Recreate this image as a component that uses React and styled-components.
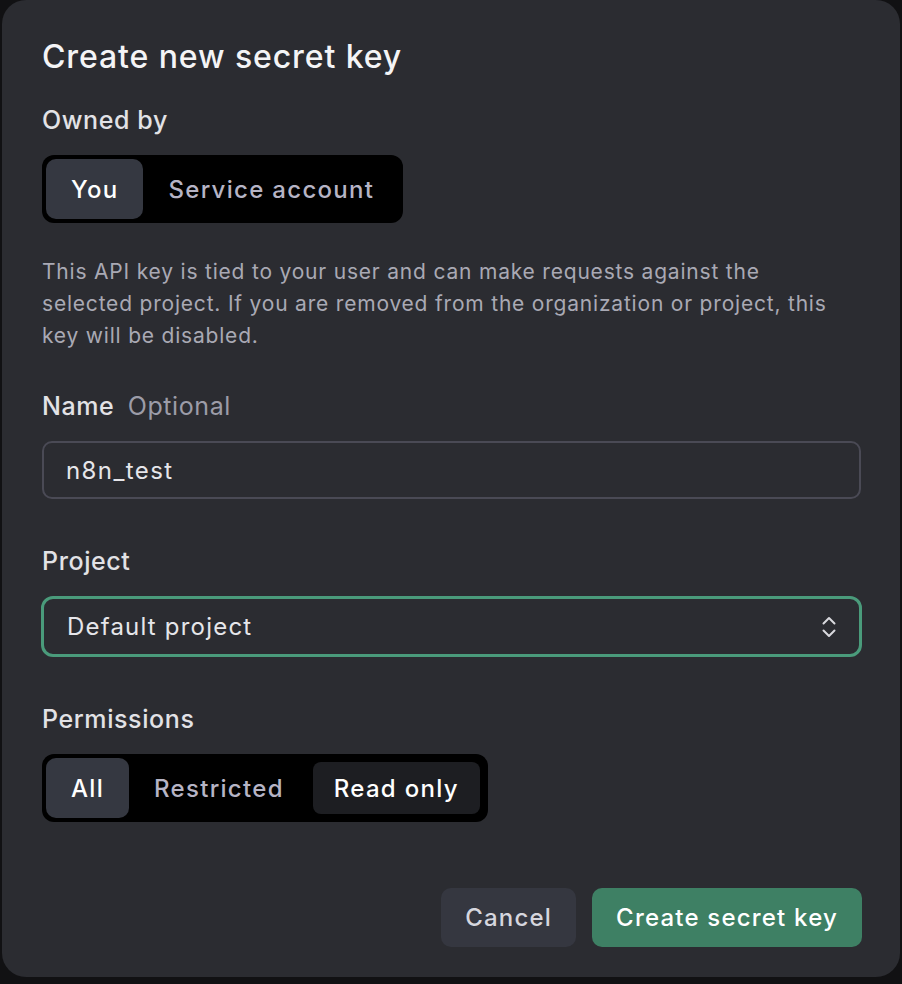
import React, { useState } from 'react';
import styled, { createGlobalStyle } from 'styled-components';

const GlobalStyle = createGlobalStyle`
  html, body {
    margin: 0;
    padding: 0;
    background: #111113;
  }
  body {
    font-family: Inter, "Noto Sans", "Liberation Sans", sans-serif;
    -webkit-font-smoothing: antialiased;
  }
`;

function ChevronsIcon() {
  return (
    <svg width="14" height="22" viewBox="0 0 14 22" fill="none" stroke="#d9d9de" strokeWidth="2" strokeLinecap="round" strokeLinejoin="round">
      <path d="M1.5 7.5 L7 2 L12.5 7.5" />
      <path d="M1.5 14.5 L7 20 L12.5 14.5" />
    </svg>
  );
}

function App() {
  const [owner, setOwner] = useState('you');
  const [perm, setPerm] = useState('all');
  const [name, setName] = useState('n8n_test');

  return (
    <>
      <GlobalStyle />
      <Page>
        <Modal>
          <Title>Create new secret key</Title>

          <Label>Owned by</Label>
          <Segmented>
            <Segment active={owner === 'you'} onClick={() => setOwner('you')}>You</Segment>
            <Segment active={owner === 'service'} onClick={() => setOwner('service')}>Service account</Segment>
          </Segmented>

          <Description>
            This API key is tied to your user and can make requests against the
            selected project. If you are removed from the organization or project, this
            key will be disabled.
          </Description>

          <Label>
            Name <Optional>Optional</Optional>
          </Label>
          <TextInput value={name} onChange={(e) => setName(e.target.value)} />

          <Label spaced>Project</Label>
          <Select>
            <span>Default project</span>
            <ChevronsIcon />
          </Select>

          <Label spaced>Permissions</Label>
          <Segmented>
            <Segment active={perm === 'all'} onClick={() => setPerm('all')}>All</Segment>
            <Segment active={perm === 'restricted'} onClick={() => setPerm('restricted')}>Restricted</Segment>
            <Segment hovered active={perm === 'read'} onClick={() => setPerm('read')}>Read only</Segment>
          </Segmented>

          <Footer>
            <Button>Cancel</Button>
            <Button primary>Create secret key</Button>
          </Footer>
        </Modal>
      </Page>
    </>
  );
}

export default App;

const Page = styled.div`
  width: 902px;
  height: 984px;
  padding-left: 2px;
  box-sizing: border-box;
  overflow: hidden;
`;

const Modal = styled.div`
  width: 898px;
  height: 977px;
  box-sizing: border-box;
  background: #2b2c31;
  border-radius: 24px;
  padding: 37px 38px 0 40px;
  display: flex;
  flex-direction: column;
  align-items: flex-start;
`;

const Title = styled.h1`
  margin: 0;
  font-size: 32px;
  line-height: 40px;
  font-weight: 500;
  color: #f4f4f6;
  letter-spacing: 0.9px;
`;

const Label = styled.div`
  margin-top: ${(p) => (p.spaced ? '46px' : '27px')};
  margin-bottom: 19px;
  font-size: 25px;
  line-height: 32px;
  font-weight: 500;
  color: #e2e2e6;
  letter-spacing: 0.6px;
`;

const Optional = styled.span`
  margin-left: 6px;
  font-weight: 400;
  color: #9c9ca8;
`;

const Segmented = styled.div`
  display: flex;
  align-items: stretch;
  background: #000;
  border-radius: 12px;
  padding: 4px;
  height: 68px;
  box-sizing: border-box;
`;

const Segment = styled.button`
  border: none;
  font-family: inherit;
  font-size: 24px;
  font-weight: 500;
  letter-spacing: 1.3px;
  padding: 0 ${(p) => (p.hovered ? '21px' : '25px')};
  margin: ${(p) => (p.hovered ? '4px' : '0')};
  border-radius: ${(p) => (p.hovered ? '8px' : '10px')};
  cursor: pointer;
  background: ${(p) => (p.active ? '#353841' : p.hovered ? '#1d1e22' : 'transparent')};
  color: ${(p) => (p.active || p.hovered ? '#ffffff' : '#b6b4c5')};
`;

const Description = styled.p`
  margin: 33px 0 11px 0;
  font-size: 21px;
  line-height: 32px;
  color: #a9a9b4;
  letter-spacing: 0.8px;
  max-width: 800px;
`;

const TextInput = styled.input`
  width: calc(100% - 1px);
  height: 58px;
  box-sizing: border-box;
  background: transparent;
  border: 2px solid #4a4a55;
  border-radius: 10px;
  padding: 0 22px;
  font-family: inherit;
  font-size: 24px;
  letter-spacing: 1.4px;
  color: #e6e6ea;
  outline: none;
`;

const Select = styled.div`
  width: calc(100% + 1px);
  margin-left: -1px;
  height: 61px;
  box-sizing: border-box;
  border: 3px solid #4a9b7b;
  border-radius: 12px;
  padding: 0 23px 0 23px;
  display: flex;
  align-items: center;
  justify-content: space-between;
  font-size: 24px;
  letter-spacing: 1.2px;
  color: #e6e6ea;
  cursor: pointer;
`;

const Footer = styled.div`
  align-self: stretch;
  display: flex;
  justify-content: flex-end;
  gap: 16px;
  margin-top: 66px;
`;

const Button = styled.button`
  height: 59px;
  padding: 0 24px;
  border: none;
  border-radius: 10px;
  font-family: inherit;
  font-size: 24px;
  font-weight: 500;
  letter-spacing: 1.2px;
  cursor: pointer;
  background: ${(p) => (p.primary ? '#3e8064' : '#353740')};
  color: ${(p) => (p.primary ? '#ffffff' : '#d6d6de')};
`;
